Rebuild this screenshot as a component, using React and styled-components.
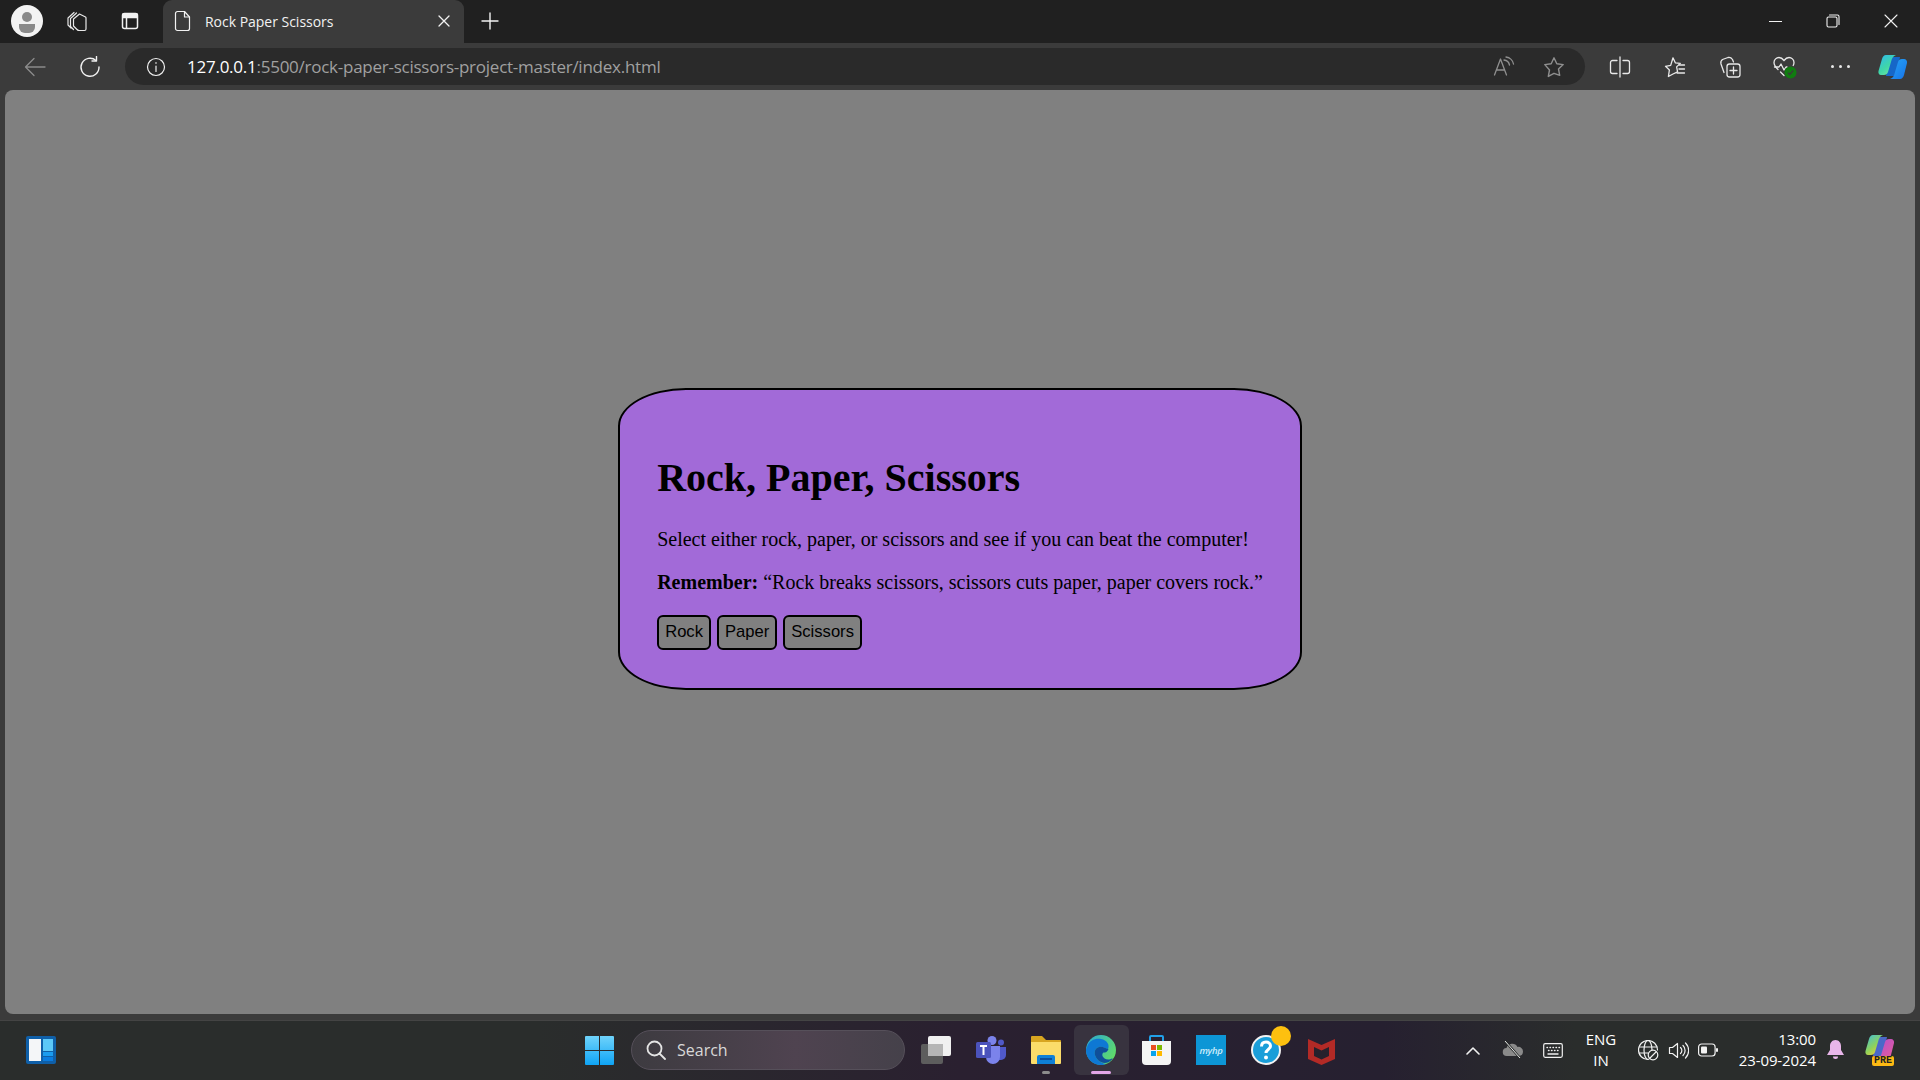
import React from 'react';
import styled, { createGlobalStyle } from 'styled-components';

const GlobalStyle = createGlobalStyle`
    html, body {
        margin: 0;
        padding: 0;
        height: 100%;
        overflow: hidden;
        background: #3b3b3b;
    }
    #root {
        height: 100%;
    }
`

const UI_FONT = `"Open Sans", "Noto Sans", sans-serif`;

const Window = styled.div`
    display: flex;
    flex-direction: column;
    width: 1920px;
    height: 1080px;
    background: #3b3b3b;
    font-family: ${UI_FONT};
`

const TabStrip = styled.div`
    display: flex;
    align-items: center;
    height: 43px;
    flex: none;
    background: #202020;
    color: #fff;
`

const StripSlot = styled.div`
    display: flex;
    align-items: center;
    justify-content: center;
    flex: none;
    width: ${p => p.$w || 53}px;
    height: 100%;
    box-sizing: border-box;
    padding-bottom: ${p => p.$lift || 0}px;
`

const Avatar = styled.div`
    width: 32px;
    height: 32px;
    margin-left: 11px;
    margin-bottom: 1px;
    flex: none;
`

const Tab = styled.div`
    display: flex;
    align-items: center;
    width: 301px;
    height: 43px;
    margin-left: 14px;
    padding: 0 14px 1px 11px;
    box-sizing: border-box;
    background: #3b3b3b;
    border-radius: 9px 9px 0 0;
    flex: none;
`

const TabTitle = styled.span`
    flex: 1;
    margin-left: 13px;
    font-size: 14px;
    letter-spacing: -0.02px;
    color: #f2f2f2;
`

const Spacer = styled.div`
    flex: 1;
`

const Toolbar = styled.div`
    display: flex;
    align-items: center;
    height: 47px;
    flex: none;
    background: #3b3b3b;
`

const AddressBar = styled.div`
    display: flex;
    align-items: center;
    width: 1460px;
    height: 37px;
    margin-left: 15px;
    flex: none;
    border-radius: 19px;
    background: #2a2a2a;
`

const UrlText = styled.div`
    flex: 1;
    font-size: 17px;
    letter-spacing: -0.25px;
    color: #a0a0a0;
    white-space: nowrap;

    b {
        font-weight: 400;
        color: #fff;
    }
`

const Viewport = styled.main`
    flex: 1;
    display: flex;
    justify-content: center;
    align-items: flex-start;
    margin: 0 5px 6px;
    padding-top: 298px;
    border-radius: 8px;
    background: #808080;
`

const Card = styled.section`
    width: fit-content;
    padding: 37px 37px 38px;
    border: 2px solid #000;
    border-radius: 68px / 38px;
    background: #a26ad8;
    font-family: "Liberation Serif", "Times New Roman", serif;
    color: #000;
`

const Title = styled.h1`
    margin: 26.8px 0;
    font-size: 40px;
    font-weight: 700;
`

const Para = styled.p`
    margin: 20px 0;
    font-size: 20px;
    white-space: nowrap;
`

const Buttons = styled.div`
    display: flex;
    gap: 6px;
    margin-top: 21px;
`

const GameButton = styled.button`
    height: 35px;
    padding: 0 6px;
    border: 2px solid #000;
    border-radius: 6px;
    background: #808080;
    color: #000;
    font-family: "Liberation Sans", Arial, sans-serif;
    font-size: 16.6px;
`

const Taskbar = styled.footer`
    display: flex;
    align-items: center;
    height: 58px;
    flex: none;
    padding: 0 14px 1px 0;
    border-top: 1px solid #444;
    background: linear-gradient(90deg, #2a2d2c 0%, #2a2d2c 28%, #2a2030 50%, #262030 72%, #2a2d2c 82%, #2a2d2c 100%);
    color: #fff;
`

const SearchBox = styled.div`
    display: flex;
    align-items: center;
    width: 274px;
    height: 40px;
    flex: none;
    margin-left: 9px;
    margin-right: 3.5px;
    padding-left: 14px;
    box-sizing: border-box;
    border-radius: 20px;
    border: 1px solid #56505a;
    background: linear-gradient(90deg, #3d3b40 0%, #4f4350 60%, #45414a 100%);
    color: #d8d8d8;
    font-size: 16px;
`

const SearchLabel = styled.span`
    margin-left: 11px;
`

const TaskSlot = styled.div`
    position: relative;
    display: flex;
    align-items: center;
    justify-content: center;
    flex: none;
    width: ${p => p.$w || 55}px;
    height: 50px;
    border-radius: 6px;
    ${p => p.$active && 'background: #38333f;'}
    ${p => p.$push && `margin-left: ${p.$push}px;`}
`

const RunDot = styled.span`
    position: absolute;
    bottom: 1px;
    left: 50%;
    transform: translateX(-50%);
    width: ${p => (p.$active ? 20 : 8)}px;
    height: 3px;
    border-radius: 2px;
    background: ${p => (p.$active ? '#e3a6e8' : '#8c8c8c')};
`

const BadgeDot = styled.span`
    position: absolute;
    top: 1px;
    right: 3px;
    width: 20px;
    height: 20px;
    border-radius: 50%;
    background: #fdc00f;
`

const LangText = styled.div`
    width: 56px;
    margin-right: 8px;
    flex: none;
    text-align: center;
    font-size: 15px;
    line-height: 21px;
`

const Clock = styled.div`
    width: 97px;
    flex: none;
    text-align: right;
    font-size: 15px;
    line-height: 21px;
    letter-spacing: -0.1px;
    white-space: nowrap;
`

const TrayIcon = styled.div`
    display: flex;
    align-items: center;
    justify-content: center;
    flex: none;
    width: ${p => p.$w || 40}px;
`

const Svg = ({ size = 24, h, vb, children, stroke = 'currentColor', sw = 1.5 }) => (
    <svg width={size} height={h || size} viewBox={vb || `0 0 ${size} ${h || size}`} fill="none" stroke={stroke} strokeWidth={sw} strokeLinecap="round" strokeLinejoin="round">
        {children}
    </svg>
)

const AvatarIcon = () => (
    <svg width="32" height="32" viewBox="0 0 32 32">
        <circle cx="16" cy="16" r="16" fill="#f3f3f3" />
        <circle cx="16" cy="12" r="5" fill="#8a8a8a" />
        <path d="M8 19h16v3a6 6 0 0 1-6 6h-4a6 6 0 0 1-6-6z" fill="#8a8a8a" />
    </svg>
)

const WorkspacesIcon = () => (
    <Svg size={22} sw={1.2} stroke="#e8e8e8">
        <path d="M2 8l6-5.500M2 8v7l3 3M4.500 8.500l6-5.500M4.500 8.500v8l3 3" />
        <path d="M7.500 9l6-5 6 3c.5.3.5.5.5 1v11c0 1-.5 1.500-1.500 1.500H13c-1 0-1.500-.5-2-1l-3.500-3.500z" />
    </Svg>
)

const TabActionsIcon = () => (
    <Svg size={20} sw={1.5} stroke="#f2f2f2">
        <rect x="2.500" y="2.500" width="15" height="15" rx="2" />
        <path d="M6.500 3v14" />
        <rect x="3" y="3" width="14" height="3.500" fill="#f2f2f2" />
    </Svg>
)

const DocIcon = () => (
    <Svg size={18} h={22} sw={1.2} stroke="#f2f2f2">
        <path d="M3.500 1.500h7l5 5.500v11.500a2 2 0 0 1-2 2h-10a2 2 0 0 1-2-2V3.500a2 2 0 0 1 2-2z" />
        <path d="M10.500 1.500v5.500h5" />
    </Svg>
)

const CloseIcon = ({ size = 12, sw = 1.3 }) => (
    <Svg size={size} sw={sw} stroke="#f2f2f2">
        <path d={`M1 1L${size - 1} ${size - 1}M${size - 1} 1L1 ${size - 1}`} />
    </Svg>
)

const PlusIcon = () => (
    <Svg size={18} sw={1.4} stroke="#f2f2f2">
        <path d="M9 1v16M1 9h16" />
    </Svg>
)

const MinIcon = () => (
    <Svg size={13} sw={1} stroke="#f2f2f2">
        <path d="M0 6.500h13" />
    </Svg>
)

const RestoreIcon = () => (
    <Svg size={14} sw={1.1} stroke="#f2f2f2">
        <rect x="1" y="3" width="10" height="10" rx="1.500" />
        <path d="M3.500 1h8a1.500 1.500 0 0 1 1.500 1.500v8" />
    </Svg>
)

const BackIcon = () => (
    <Svg size={22} sw={1.3} stroke="#8b8b8b">
        <path d="M21 11H1.500M10 2.500L1.500 11l8.500 8.500" />
    </Svg>
)

const ReloadIcon = () => (
    <Svg size={22} sw={1.4} stroke="#f0f0f0">
        <path d="M17 4.500A9 9 0 1 0 20 11" />
        <path d="M17.500 .5v4.500H13" />
    </Svg>
)

const InfoIcon = () => (
    <Svg size={20} sw={1.2} stroke="#f0f0f0">
        <circle cx="10" cy="10" r="8.500" />
        <path d="M10 9v5.500M10 5.500v.8" />
    </Svg>
)

const ReadAloudIcon = () => (
    <Svg size={22} sw={1.3} stroke="#8f8f8f">
        <path d="M1.500 19L7.500 3l6 16M3.500 14h8" />
        <path d="M11 4c3 .3 5 2.500 5.500 5M13 1c4 .5 7 3.500 7.500 7" />
    </Svg>
)

const StarIcon = ({ color = '#8f8f8f' }) => (
    <Svg size={22} sw={1.4} stroke={color}>
        <path d="M11 1.800l2.800 6 6.400.8-4.700 4.400 1.200 6.400L11 17.300l-5.700 3.100 1.200-6.400L1.800 8.600l6.400-.8z" />
    </Svg>
)

const SplitIcon = () => (
    <Svg size={22} sw={1.3} stroke="#e8e8e8">
        <path d="M11 1v20M8 4.500H3.500a2 2 0 0 0-2 2v9a2 2 0 0 0 2 2H8M14 4.500h4.500a2 2 0 0 1 2 2v9a2 2 0 0 1-2 2H14" />
    </Svg>
)

const FavoritesIcon = () => (
    <Svg size={22} sw={1.3} stroke="#e8e8e8">
        <path d="M9 1.800l2.300 5 5 .6-3.700 3.500 1 5L9 18l-4.600 2.500 1-6.600L1.500 10.300l5.200-.9z" />
        <path d="M15 9h5.500M15 13h5.500M13 17h7.500" />
    </Svg>
)

const CollectionsIcon = () => (
    <Svg size={22} sw={1.3} stroke="#e8e8e8">
        <path d="M5 16.500L2 8c-.5-2 0-3.500 1.500-4.500L9 1.500c2-.5 3.500.5 4.500 2L14.500 6" />
        <rect x="8" y="8" width="13" height="13" rx="2.500" />
        <path d="M14.500 11v7M11 14.500h7" />
    </Svg>
)

const HealthIcon = () => (
    <svg width="24" height="24" viewBox="0 0 24 24" fill="none">
        <path d="M5 14.500C2.500 12 1 10.500 1 7.500 1 4.500 3.500 2.500 6 2.500c2 0 3.500 1 5 3 1.500-2 3-3 5-3 2.500 0 5 2 5 5 0 1-.2 2-.8 3M11 20.500L7.500 17" stroke="#e8e8e8" strokeWidth="1.300" strokeLinecap="round" />
        <path d="M1.500 12H6l2-3 3 6 2-3h1" stroke="#e8e8e8" strokeWidth="1.300" strokeLinecap="round" strokeLinejoin="round" />
        <circle cx="17.500" cy="17.500" r="6" fill="#107c10" />
        <path d="M15 17.700l1.800 1.800 3.400-4" stroke="#3a3a3a" strokeWidth="1.300" />
    </svg>
)

const CopilotIcon = ({ pre }) => (
    <svg width="30" height="26" viewBox="0 0 30 26">
        <defs>
            <linearGradient id={pre ? 'cpa2' : 'cpa'} x1="0" y1="0" x2="0.700" y2="1">
                <stop offset="0" stopColor={pre ? '#3dbde0' : '#2fb8f0'} />
                <stop offset="0.600" stopColor={pre ? '#8fd35a' : '#3fd6a8'} />
                <stop offset="1" stopColor={pre ? '#f0c93c' : '#6fe3a0'} />
            </linearGradient>
            <linearGradient id={pre ? 'cpb2' : 'cpb'} x1="0" y1="0" x2="1" y2="1">
                <stop offset="0" stopColor={pre ? '#b04fd0' : '#26a5f5'} />
                <stop offset="1" stopColor={pre ? '#e85c9a' : '#1873e8'} />
            </linearGradient>
        </defs>
        <path d="M12 3h10l-4 19H8z" fill={pre ? '#4a68c8' : '#1667c8'} />
        <path d="M8 1h10c-3 1-4 3-5 7l-3 10c-.5 2-2 3-4 3H3c-2 0-3-2-2.500-4L4 5c.5-2 2-4 4-4z" fill={`url(#${pre ? 'cpa2' : 'cpa'})`} />
        <path d="M22 25H12c3-1 4-3 5-7l3-10c.5-2 2-3 4-3h2c2 0 3.500 2 3 4L26 21c-.5 2-2 4-4 4z" fill={`url(#${pre ? 'cpb2' : 'cpb'})`} />
    </svg>
)

const WidgetsIcon = () => (
    <svg width="30" height="28" viewBox="0 0 30 28">
        <rect width="30" height="28" rx="2" fill="#0f5fa8" />
        <rect x="3" y="3" width="12" height="22" fill="#f4f6f8" />
        <rect x="17" y="3" width="10" height="12" fill="#5cc8f7" />
        <rect x="17" y="16" width="10" height="4" fill="#1a9cf0" />
        <rect x="17" y="21" width="10" height="4" fill="#0a7ce0" />
    </svg>
)

const WindowsLogo = () => (
    <svg width="29" height="29" viewBox="0 0 29 29">
        <defs>
            <linearGradient id="winLogo" x1="0" y1="0" x2="0" y2="1">
                <stop offset="0" stopColor="#6fd3fb" />
                <stop offset="1" stopColor="#0fa4f5" />
            </linearGradient>
        </defs>
        <path d="M1 0h13v14H0V1a1 1 0 0 1 1-1zM15 0h13a1 1 0 0 1 1 1v13H15zM0 15h14v14H1a1 1 0 0 1-1-1zM15 15h14v13a1 1 0 0 1-1 1H15z" fill="url(#winLogo)" />
    </svg>
)

const SearchIcon = () => (
    <Svg size={20} sw={1.8} stroke="#e4e4e4">
        <circle cx="8.500" cy="8.500" r="7" />
        <path d="M13.500 13.500l5.500 5.500" />
    </Svg>
)

const TaskViewIcon = () => (
    <svg width="30" height="28" viewBox="0 0 30 28">
        <rect x="0" y="8" width="22" height="20" rx="2" fill="#5d5d5d" />
        <rect x="7" y="0" width="23" height="20" rx="2" fill="#f0f0f0" />
        <rect x="7" y="8" width="15" height="12" fill="#b5b5b5" />
    </svg>
)

const TeamsIcon = () => (
    <svg width="30" height="28" viewBox="0 0 30 28">
        <circle cx="16" cy="4.500" r="4.500" fill="#7b83eb" />
        <circle cx="25" cy="6.500" r="3" fill="#5059c9" />
        <path d="M20 11h10v8a5 5 0 0 1-5 5h-5z" fill="#5059c9" />
        <path d="M9 10h15v11a7 7 0 0 1-14 0z" fill="#7b83eb" />
        <rect x="0" y="6" width="15" height="16" rx="1.500" fill="#4b53bc" />
        <path d="M4 10h7M7.500 10v9" stroke="#fff" strokeWidth="2" />
    </svg>
)

const FilesIcon = () => (
    <svg width="30" height="28" viewBox="0 0 30 28">
        <path d="M1 0h10l4 4h14a1 1 0 0 1 1 1v5H0V1a1 1 0 0 1 1-1z" fill="#d8a520" />
        <path d="M0 6h30v21a1 1 0 0 1-1 1H1a1 1 0 0 1-1-1z" fill="#fbdc6a" />
        <path d="M6 28v-7a2 2 0 0 1 2-2h14a2 2 0 0 1 2 2v7z" fill="#0f80d7" />
        <path d="M9 23h12" stroke="#0a4f9c" strokeWidth="2" />
    </svg>
)

const EdgeIcon = () => (
    <svg width="30" height="30" viewBox="0 0 30 30">
        <defs>
            <linearGradient id="edgeA" x1="0" y1="0" x2="1" y2="0.600">
                <stop offset="0" stopColor="#2aa6d8" />
                <stop offset="1" stopColor="#5fdc6a" />
            </linearGradient>
        </defs>
        <circle cx="15" cy="15" r="15" fill="url(#edgeA)" />
        <path d="M1 12C3 5 10 3 15 4c6 1 9 6 7 10-3 0-5-3-9-2-5 1-6 8-1 13 2 2 5 3.500 8 4-1.500.6-3.500 1-5 1C6 30 0 23 0 15c0-1 .5-2 1-3z" fill="#0e78d4" />
        <path d="M13 12c-5 1-6 8-1 13 3 3 9 5 14-.5l.5-1.500c-4 3-9 1-10-2-.5-1.500 0-3 1-3.500 2 0 4-.5 5-3.500-3 0-5.500-3-9.500-2z" fill="#0f4f9a" />
    </svg>
)

const StoreIcon = () => (
    <svg width="29" height="30" viewBox="0 0 29 30">
        <path d="M8 6V2a1 1 0 0 1 1-1h11a1 1 0 0 1 1 1v4" fill="none" stroke="#21a0e8" strokeWidth="2" />
        <path d="M0 6h29v20a4 4 0 0 1-4 4H4a4 4 0 0 1-4-4z" fill="#f4f4f4" />
        <rect x="9" y="10" width="5" height="5" fill="#ea4f22" />
        <rect x="15" y="10" width="5" height="5" fill="#7cb800" />
        <rect x="9" y="16" width="5" height="5" fill="#08a4ee" />
        <rect x="15" y="16" width="5" height="5" fill="#feb900" />
    </svg>
)

const MyHpTile = styled.div`
    display: flex;
    align-items: center;
    justify-content: center;
    width: 30px;
    height: 30px;
    background: #0d96d6;
    color: #cfeefb;
    font-size: 9.5px;
    font-style: italic;
    font-weight: 600;
    letter-spacing: -0.3px;
`

const HelpIcon = () => (
    <svg width="30" height="30" viewBox="0 0 30 30">
        <circle cx="15" cy="15" r="14" fill="#1a9ed9" stroke="#f2f2f2" strokeWidth="2" />
        <path d="M10.500 11.500c0-3 2-4.500 4.500-4.500s4.500 1.500 4.500 4c0 3.500-4.500 3.500-4.500 7" fill="none" stroke="#fff" strokeWidth="3" />
        <circle cx="15" cy="22.500" r="2" fill="#fff" />
    </svg>
)

const McAfeeIcon = () => (
    <svg width="27" height="30" viewBox="0 0 27 30">
        <path d="M0 4l13.500 6L27 4v20l-13.500 6L0 24z" fill="#b32a26" />
        <path d="M6 12l7.500 3.500L21 12v9l-7.500 3.500L6 21z" fill="#26212c" />
    </svg>
)

const ChevronIcon = () => (
    <Svg size={14} h={9} sw={1.6} stroke="#f2f2f2">
        <path d="M1 8l6-6 6 6" />
    </Svg>
)

const OneDriveOffIcon = () => (
    <svg width="22" height="18" viewBox="0 0 22 18" fill="none">
        <path d="M5 15a4 4 0 0 1-.5-8 6 6 0 0 1 11-1A4.500 4.500 0 0 1 21 10.500 4.500 4.500 0 0 1 17 15z" fill="#8a8a8a" />
        <path d="M3 0l15 17" stroke="#2a2d2c" strokeWidth="2.500" />
        <path d="M3 0l15 17" stroke="#e8e8e8" strokeWidth="1" />
    </svg>
)

const KeyboardIcon = () => (
    <Svg size={20} h={15} sw={1.2} stroke="#f0f0f0">
        <rect x=".7" y=".7" width="18.600" height="13.600" rx="1.500" />
        <path d="M4 4.500h.5M7 4.500h.5M10 4.500h.5M13 4.500h.5M16 4.500h.5M5.500 7.500h.5M8.500 7.500h.5M11.500 7.500h.5M14.500 7.500h.5M5 11h10" strokeWidth="1.400" />
    </Svg>
)

const GlobeOffIcon = () => (
    <Svg size={21} sw={1.2} stroke="#f2f2f2">
        <path d="M10 19.500a9.500 9.500 0 1 1 9.500-9.500" />
        <ellipse cx="10" cy="10" rx="4" ry="9.500" />
        <path d="M1 7h18M1 13h9" />
        <circle cx="15" cy="15" r="4.800" fill="#2a2d2c" />
        <path d="M12 18l6-6" />
    </Svg>
)

const SpeakerIcon = () => (
    <Svg size={21} sw={1.2} stroke="#f2f2f2">
        <path d="M1.500 7.500h3L9.500 3.500v14l-5-4h-3z" />
        <path d="M12.500 7.500a4 4 0 0 1 0 6M15 5.500a7 7 0 0 1 0 10M17.500 3a10.500 10.500 0 0 1 0 15" />
    </Svg>
)

const BatteryIcon = () => (
    <svg width="20" height="14" viewBox="0 0 20 14" fill="none">
        <rect x=".6" y="1" width="16.500" height="12" rx="3" stroke="#f2f2f2" strokeWidth="1.200" />
        <rect x="3" y="3.500" width="6" height="7" rx="1" fill="#f2f2f2" />
        <rect x="18" y="5" width="2" height="4" rx="1" fill="#f2f2f2" />
    </svg>
)

const BellIcon = () => (
    <svg width="17" height="20" viewBox="0 0 17 20">
        <path d="M8.500 0C5 0 3 3 3 6v4l-3 5h17l-3-5V6c0-3-2-6-5.500-6z" fill="#e9b6ea" />
        <path d="M6 16.500h5a2.500 2.500 0 0 1-5 0z" fill="#e9b6ea" />
    </svg>
)

const CopilotPre = styled.div`
    position: relative;
    width: 30px;
    height: 32px;
`

const PreBadge = styled.span`
    position: absolute;
    left: 7px;
    bottom: 0;
    padding: 0 2px;
    border-radius: 2px;
    background: #fdb913;
    color: #222;
    font-family: "Liberation Mono", monospace;
    font-size: 10px;
    line-height: 10px;
    font-weight: 700;
`

const DotsWrap = styled.div`
    display: flex;
    gap: 5px;

    span {
        width: 3px;
        height: 3px;
        border-radius: 50%;
        background: #e8e8e8;
    }
`

const App = () => {
    return (
        <Window>
            <GlobalStyle />
            <TabStrip>
                <Avatar><AvatarIcon /></Avatar>
                <StripSlot $w={68} $lift={1}><WorkspacesIcon /></StripSlot>
                <StripSlot $w={38} $lift={1}><TabActionsIcon /></StripSlot>
                <Tab>
                    <DocIcon />
                    <TabTitle>Rock Paper Scissors</TabTitle>
                    <CloseIcon />
                </Tab>
                <StripSlot $w={52} $lift={1}><PlusIcon /></StripSlot>
                <Spacer />
                <StripSlot $w={57} $lift={1}><MinIcon /></StripSlot>
                <StripSlot $w={57} $lift={1}><RestoreIcon /></StripSlot>
                <StripSlot $w={59} $lift={1}><CloseIcon size={14} sw={1.100} /></StripSlot>
            </TabStrip>
            <Toolbar>
                <StripSlot $w={70}><BackIcon /></StripSlot>
                <StripSlot $w={40}><ReloadIcon /></StripSlot>
                <AddressBar>
                    <StripSlot $w={62}><InfoIcon /></StripSlot>
                    <UrlText><b>127.0.0.1</b>:5500/rock-paper-scissors-project-master/index.html</UrlText>
                    <StripSlot $w={50}><ReadAloudIcon /></StripSlot>
                    <StripSlot $w={50}><StarIcon /></StripSlot>
                    <StripSlot $w={6} />
                </AddressBar>
                <StripSlot $w={70}><SplitIcon /></StripSlot>
                <StripSlot $w={40}><FavoritesIcon /></StripSlot>
                <StripSlot $w={70}><CollectionsIcon /></StripSlot>
                <StripSlot $w={40}><HealthIcon /></StripSlot>
                <StripSlot $w={70}><DotsWrap><span /><span /><span /></DotsWrap></StripSlot>
                <StripSlot $w={36}><CopilotIcon /></StripSlot>
            </Toolbar>
            <Viewport>
                <Card>
                    <Title>Rock, Paper, Scissors</Title>
                    <Para>Select either rock, paper, or scissors and see if you can beat the computer!</Para>
                    <Para><strong>Remember:</strong> “Rock breaks scissors, scissors cuts paper, paper covers rock.”</Para>
                    <Buttons>
                        <GameButton>Rock</GameButton>
                        <GameButton>Paper</GameButton>
                        <GameButton>Scissors</GameButton>
                    </Buttons>
                </Card>
            </Viewport>
            <Taskbar>
                <TaskSlot $w={82}><WidgetsIcon /></TaskSlot>
                <TaskSlot $w={45} $push={495}><WindowsLogo /></TaskSlot>
                <SearchBox>
                    <SearchIcon />
                    <SearchLabel>Search</SearchLabel>
                </SearchBox>
                <TaskSlot><TaskViewIcon /></TaskSlot>
                <TaskSlot><TeamsIcon /></TaskSlot>
                <TaskSlot><FilesIcon /><RunDot /></TaskSlot>
                <TaskSlot $active><EdgeIcon /><RunDot $active /></TaskSlot>
                <TaskSlot><StoreIcon /></TaskSlot>
                <TaskSlot><MyHpTile>myhp</MyHpTile></TaskSlot>
                <TaskSlot><HelpIcon /><BadgeDot /></TaskSlot>
                <TaskSlot><McAfeeIcon /></TaskSlot>
                <Spacer />
                <TrayIcon><ChevronIcon /></TrayIcon>
                <TrayIcon><OneDriveOffIcon /></TrayIcon>
                <TrayIcon><KeyboardIcon /></TrayIcon>
                <LangText>ENG<br />IN</LangText>
                <TrayIcon $w={22}><GlobeOffIcon /></TrayIcon>
                <TrayIcon $w={38}><SpeakerIcon /></TrayIcon>
                <TrayIcon $w={22}><BatteryIcon /></TrayIcon>
                <Clock>13:00<br />23-09-2024</Clock>
                <TrayIcon $w={38}><BellIcon /></TrayIcon>
                <TrayIcon $w={52}>
                    <CopilotPre>
                        <CopilotIcon pre />
                        <PreBadge>PRE</PreBadge>
                    </CopilotPre>
                </TrayIcon>
            </Taskbar>
        </Window>
    )
}

export default App
